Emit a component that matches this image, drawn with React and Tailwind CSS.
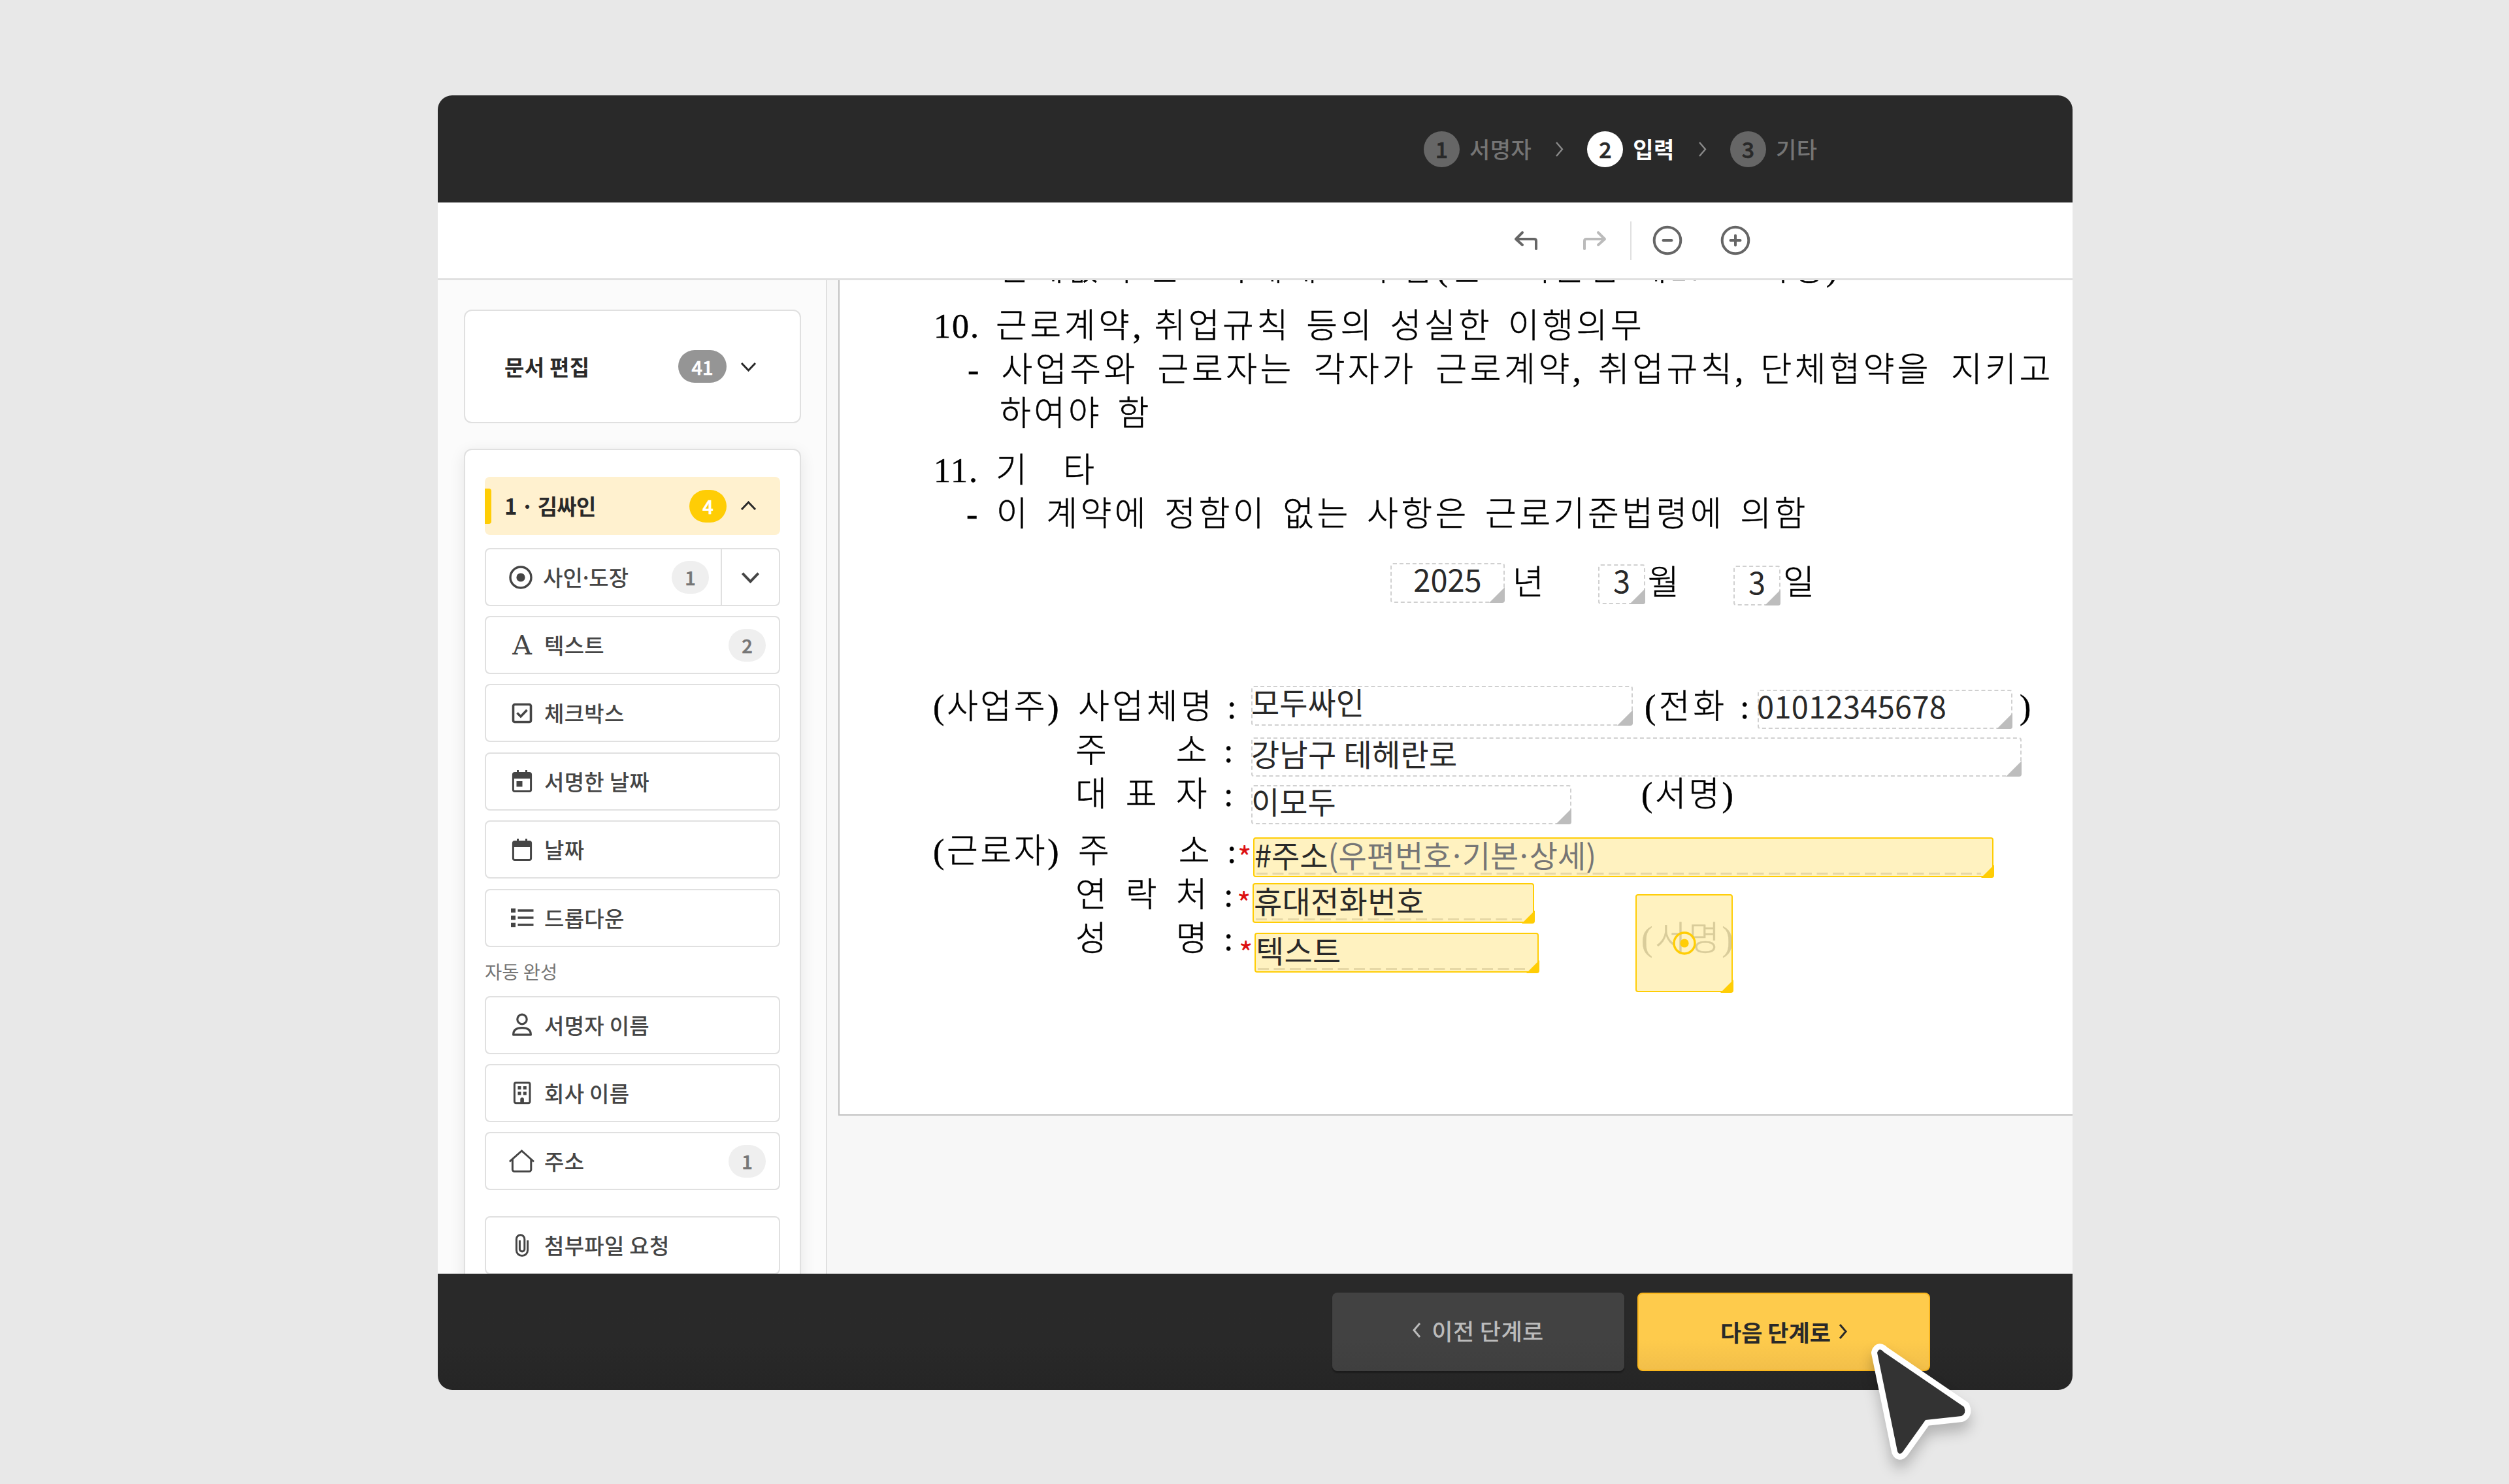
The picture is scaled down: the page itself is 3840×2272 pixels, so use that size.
const STEPS = [
  { n: 1, label: '서명자' },
  { n: 2, label: '입력', active: true },
  { n: 3, label: '기타' },
]

const BASIC_ITEMS = [
  { icon: TextIcon, label: '텍스트', count: 2 },
  { icon: CheckboxIcon, label: '체크박스' },
  { icon: SignedDateIcon, label: '서명한 날짜' },
  { icon: DateIcon, label: '날짜' },
  { icon: ListIcon, label: '드롭다운' },
]

const AUTO_ITEMS = [
  { icon: PersonIcon, label: '서명자 이름' },
  { icon: BuildingIcon, label: '회사 이름' },
  { icon: HomeIcon, label: '주소', count: 1 },
]

function Chevron({ className, dir = 'down', w = 3 }) {
  const d = {
    down: 'M2 2 L12.5 13 L23 2',
    up: 'M2 13 L12.5 2 L23 13',
    right: 'M2 2 L11 12.5 L2 23',
    left: 'M11 2 L2 12.5 L11 23',
  }[dir]
  const box = dir === 'down' || dir === 'up' ? '0 0 25 15' : '0 0 13 25'
  return (
    <svg viewBox={box} className={className} fill="none" stroke="currentColor" strokeWidth={w}>
      <path d={d} />
    </svg>
  )
}

function IconBox({ children }) {
  return (
    <svg viewBox="0 0 40 40" className="w-10 h-10 shrink-0" fill="none" stroke="currentColor" strokeWidth="3.6">
      {children}
    </svg>
  )
}

function StampIcon({ className }) {
  return (
    <svg viewBox="0 0 40 40" className={className} fill="none" stroke="currentColor" strokeWidth="3.4">
      <circle cx="20" cy="20" r="16" />
      <circle cx="20" cy="20" r="6.6" fill="currentColor" stroke="none" />
    </svg>
  )
}

function TextIcon() {
  return (
    <span className="w-10 h-10 shrink-0 text-center leading-10 text-[41px] font-['DejaVu_Serif',serif]">A</span>
  )
}

function CheckboxIcon() {
  return (
    <IconBox>
      <rect x="6.5" y="6.5" width="27" height="27" rx="2.5" />
      <path d="M12.5 19.5 L18 25 L27.5 15" />
    </IconBox>
  )
}

function DateIcon() {
  return (
    <IconBox>
      <rect x="6.4" y="7.4" width="27.2" height="28" rx="2.5" strokeWidth="3" />
      <path d="M5 9 h30 v7 h-30 z" fill="currentColor" stroke="none" />
      <path d="M13.5 3 v6 M26.5 3 v6" strokeWidth="3" />
    </IconBox>
  )
}

function SignedDateIcon() {
  return (
    <IconBox>
      <rect x="6.4" y="7.4" width="27.2" height="28" rx="2.5" strokeWidth="3" />
      <path d="M5 9 h30 v7 h-30 z" fill="currentColor" stroke="none" />
      <path d="M13.5 3 v6 M26.5 3 v6" strokeWidth="3" />
      <rect x="11.5" y="20" width="9" height="8.5" fill="currentColor" stroke="none" />
    </IconBox>
  )
}

function ListIcon() {
  return (
    <IconBox>
      <path d="M13.5 9 h24 M13.5 20 h24 M13.5 31 h24" strokeWidth="3.4" />
      <path d="M3 9 h7 M3 20 h7 M3 31 h7" strokeWidth="6.4" />
    </IconBox>
  )
}

function PersonIcon() {
  return (
    <IconBox>
      <ellipse cx="20" cy="11.5" rx="7.2" ry="7.4" strokeWidth="3.2" />
      <path d="M6.6 35.2 C6.6 27.6 12 24.6 20 24.6 C28 24.6 33.4 27.6 33.4 35.2 Z" strokeWidth="3.2" strokeLinejoin="round" />
    </IconBox>
  )
}

function BuildingIcon() {
  return (
    <IconBox>
      <rect x="8.4" y="4.4" width="23.6" height="31.4" rx="2.5" strokeWidth="3" />
      <path d="M13.5 12.4 h5 M21.8 12.4 h5 M13.5 21 h5 M21.8 21 h5" strokeWidth="5" />
      <path d="M17.3 36 v-6 a2.8 2.8 0 0 1 5.6 0 v6 z" fill="currentColor" stroke="none" />
    </IconBox>
  )
}

function HomeIcon() {
  return (
    <IconBox>
      <path d="M0.8 20.5 L19.5 4 L38 20.5" strokeWidth="3" />
      <path d="M5.4 17 V32.5 a3 3 0 0 0 3 3 H30.8 a3 3 0 0 0 3 -3 V17" strokeWidth="3" />
    </IconBox>
  )
}

function ClipIcon() {
  return (
    <IconBox>
      <path
        d="M28.6 12 V27 A8.6 8.6 0 0 1 11.4 27 V10 A6.2 6.2 0 0 1 23.8 10 V26 A3.8 3.8 0 0 1 16.4 26 V12"
        strokeWidth="3"
      />
    </IconBox>
  )
}

function Badge({ children, tone = 'light' }) {
  const cls = {
    light: 'min-w-[57px] bg-[#efefef] text-[#767676]',
    gray: 'min-w-[74px] bg-[#959595] text-white',
    yellow: 'min-w-[57px] bg-[#ffcd05] text-white',
  }[tone]
  return (
    <span className={`h-[50px] rounded-[25px] flex items-center justify-center text-[29px] leading-none font-medium [-webkit-text-stroke:0.6px_currentColor] ${cls}`}>
      {children}
    </span>
  )
}

function Item({ icon: Icon, label, count }) {
  return (
    <div className="h-[89px] shrink-0 border-2 border-[#e0e0e0] rounded-lg bg-white flex items-center pl-[35px] pr-5 text-[#454545]">
      <Icon />
      <span className="ml-[14px] text-[33px] leading-none font-medium tracking-[0.3px]">{label}</span>
      {count && <span className="ml-auto"><Badge>{count}</Badge></span>}
    </div>
  )
}

function Sidebar() {
  return (
    <aside className="w-[596px] h-full border-r-2 border-[#e0e0e0] bg-[#fbfbfb] pt-[45px] pl-10 pr-[38px]">
      <div className="h-[174px] border-2 border-[#e0e0e0] rounded-xl bg-white flex items-center pl-[60px] pr-[66px] text-[#292929]">
        <span className="text-[33px] leading-none font-bold tracking-[0.3px]">문서 편집</span>
        <span className="ml-auto mr-[21px]"><Badge tone="gray">41</Badge></span>
        <Chevron className="w-[25px] h-[15px]" />
      </div>

      <div className="mt-[39px] h-[1400px] border-2 border-[#e0e0e0] rounded-xl bg-white px-[30px] pt-[41px] shadow-[0_6px_24px_rgba(0,0,0,0.09)] flex flex-col">
        <div className="h-[89px] shrink-0 rounded-lg bg-[#fff1cf] flex items-center pr-9 text-[#292929]">
          <span className="w-[10px] h-[54px] rounded-r bg-[#ffcd05]" />
          <span className="ml-5 text-[33px] leading-none font-bold tracking-[-0.8px]">1 · 김싸인</span>
          <span className="ml-auto mr-[21px]"><Badge tone="yellow">4</Badge></span>
          <Chevron dir="up" className="w-[25px] h-[15px]" />
        </div>

        <div className="mt-5 h-[89px] shrink-0 border-2 border-[#e0e0e0] rounded-lg flex items-center text-[#454545]">
          <StampIcon className="ml-[33px] w-10 h-10" />
          <span className="ml-[14px] text-[33px] leading-none font-medium tracking-[0.2px]">
            사인<span className="-mx-[5px]">·</span>도장
          </span>
          <span className="ml-auto mr-[18px]"><Badge>1</Badge></span>
          <span className="w-[89px] h-full border-l-2 border-[#e0e0e0] flex items-center justify-center">
            <Chevron w={3.4} className="w-[29px] h-[18px]" />
          </span>
        </div>

        <div className="mt-[15px] flex flex-col gap-[15.4px]">
          {BASIC_ITEMS.map(it => <Item key={it.label} {...it} />)}
        </div>
        <p className="h-[75px] shrink-0 flex items-center text-[28.5px] leading-none text-[#767676]">자동 완성</p>
        <div className="flex flex-col gap-[15.4px]">
          {AUTO_ITEMS.map(it => <Item key={it.label} {...it} />)}
        </div>
        <div className="mt-10">
          <Item icon={ClipIcon} label="첨부파일 요청" />
        </div>
      </div>
    </aside>
  )
}

/* One printed line of the contract; commas are set tight */
function Line({ text, className = '' }) {
  return (
    <p className={`h-[67px] leading-[67px] whitespace-pre ${className}`}>
      {text.split(/(,)/).map((part, i) =>
        part === ',' ? <span key={i} className="tracking-[-3.5px]">,</span> : part
      )}
    </p>
  )
}

function PartyRow({ party, label, wide, children }) {
  return (
    <div className="h-[67px] leading-[67px] flex whitespace-pre">
      <span className="w-[218px] tracking-[3.6px]">{party}</span>
      <span className={`flex justify-between w-[206px] ${wide ? 'ml-1 mr-[22px]' : 'mr-[21px]'}`}>
        {[...label].map(ch => <span key={ch}>{ch}</span>)}
      </span>
      <span className="w-6">:</span>
      {children}
    </div>
  )
}

function Filled({ className, children }) {
  return (
    <div className={`absolute border-2 border-dashed border-[#d0d0d0] rounded text-[47px] leading-[43px] text-[#292929] whitespace-pre ${className}`}>
      {children}
      <svg viewBox="0 0 24 24" className="absolute -right-[2px] -bottom-[2px] w-6 h-6">
        <path d="M24 0 V20 a4 4 0 0 1 -4 4 H0 Z" fill="#bdbdbd" />
      </svg>
    </div>
  )
}

function Pending({ className, children, plain }) {
  return (
    <div className={`absolute border-[2.5px] border-[#ffcd05] rounded bg-[#fff0b5]/85 text-[47px] leading-[48px] text-[#292929] whitespace-pre ${className}`}>
      {!plain && <span className="absolute -left-[26px] -top-[3px] text-[46px] leading-[60px] text-[#dd1010]">*</span>}
      {children}
      {!plain && (
        <svg className="absolute left-[3px] bottom-[2px] w-[calc(100%-20px)] h-[3px]">
          <line x1="0" y1="1.5" x2="100%" y2="1.5" stroke="#e6d8a6" strokeWidth="3" strokeDasharray="17 7.5" />
        </svg>
      )}
      <svg viewBox="0 0 20 20" className="absolute -right-[3px] -bottom-[3px] w-5 h-5">
        <path d="M20 0 V16 a4 4 0 0 1 -4 4 H0 Z" fill="#ffcd05" />
      </svg>
    </div>
  )
}

function Contract() {
  return (
    <div className="relative ml-[17px] w-[1900px] h-[1279px] border-l-2 border-b-2 border-[#c2c2c2] bg-white">
      <div className="absolute inset-0 text-[52px] tracking-[4.5px] text-black font-light [-webkit-text-stroke:0.5px_currentColor] font-['Liberation_Serif','Noto_Sans_CJK_KR',serif]">
        <Line className="-mt-[51px] pl-[243px] [word-spacing:3px] tracking-[4.6px]" text="관계없이 근로자에게 교부함(근로기준법 제17조 이행)" />
        <div className="mt-[21px] flex">
          <Line className="w-[239px] pl-[144px] tracking-[2px]" text="10." />
          <Line className="[word-spacing:6px]" text="근로계약, 취업규칙 등의 성실한 이행의무" />
        </div>
        <Line className="pl-[196px] [word-spacing:12.2px]" text="- 사업주와 근로자는 각자가 근로계약, 취업규칙, 단체협약을 지키고" />
        <Line className="pl-[245px] [word-spacing:6px]" text="하여야 함" />
        <div className="mt-5 flex">
          <Line className="w-[239px] pl-[144px] tracking-[2px]" text="11." />
          <Line className="[word-spacing:8px]" text="기  타" />
        </div>
        <Line className="pl-[194px] [word-spacing:6.5px]" text="- 이 계약에 정함이 없는 사항은 근로기준법령에 의함" />

        <div className="mt-[38px] flex h-[67px] leading-[67px] pl-[1030px]">
          <span className="w-[207px]">년</span>
          <span className="w-[207px]">월</span>
          <span>일</span>
        </div>

        <div className="mt-[123px] pl-[143px]">
          <PartyRow party="(사업주)" label="사업체명" wide>
            <span className="ml-[615px] w-[574px] [word-spacing:2px]">(전화 :</span>
            <span>)</span>
          </PartyRow>
          <PartyRow label="주소" />
          <PartyRow label="대표자">
            <span className="ml-[615px] tracking-[3.5px]">(서명)</span>
          </PartyRow>
          <div className="h-5" />
          <PartyRow party="(근로자)" label="주소" wide />
          <PartyRow label="연락처" />
          <PartyRow label="성명">
            <span className="ml-[615px] tracking-[3.5px]">(서명)</span>
          </PartyRow>
        </div>
      </div>

      <Filled className="left-[843px] top-[433px] w-[175px] h-[61px] text-center">2025</Filled>
      <Filled className="left-[1161px] top-[435px] w-[72px] h-[61px] text-center">3</Filled>
      <Filled className="left-[1368px] top-[437px] w-[72px] h-[61px] text-center">3</Filled>
      <Filled className="left-[630px] top-[621px] w-[584px] h-[61px] indent-[-2px]">모두싸인</Filled>
      <Filled className="left-[1405px] top-[627px] w-[390px] h-[60px] indent-[-3px] tracking-[0.3px]">01012345678</Filled>
      <Filled className="left-[630px] top-[700px] w-[1179px] h-[60px] indent-[-2px] tracking-[0.3px]">강남구 테헤란로</Filled>
      <Filled className="left-[630px] top-[773px] w-[490px] h-[60px] indent-[-2px]">이모두</Filled>

      <Pending className="left-[633px] top-[853px] w-[1133px] h-[61px]">
        #주소
        <span className="text-[#767676]">
          (우편번호<span className="-mx-[5px]">·</span>기본<span className="-mx-[5px]">·</span>상세)
        </span>
      </Pending>
      <Pending className="left-[632px] top-[923px] w-[431px] h-[61px] tracking-[0.3px]">휴대전화번호</Pending>
      <Pending className="left-[635px] top-[999px] w-[435px] h-[61px] tracking-[0.3px]">텍스트</Pending>
      <Pending plain className="left-[1218px] top-[940px] w-[149px] h-[150px] flex items-center justify-center">
        <StampIcon className="w-10 h-10 text-[#ffcd05]" />
      </Pending>
    </div>
  )
}

function Cursor() {
  return (
    <svg viewBox="0 0 180 210" className="absolute left-[2850px] top-[2040px] w-[180px] h-[210px] drop-shadow-[0_14px_10px_rgba(0,0,0,0.22)]">
      <path
        d="M23 31 Q26 22 33 30 L156 114 Q160 124 152 128 L97 134 L62 183 Q57 189 54 182 Z"
        fill="#333"
        stroke="#fff"
        strokeWidth="18"
        strokeLinejoin="round"
        className="[paint-order:stroke]"
      />
    </svg>
  )
}

export default function App() {
  return (
    <div className="relative w-[3840px] h-[2272px] overflow-hidden bg-[#e8e8e8] pl-[670px] pt-[146px] font-['Noto_Sans_CJK_KR',sans-serif]">
      <div className="w-[2502px] h-[1982px] rounded-[22px] overflow-hidden flex flex-col bg-[#f7f7f7]">
        <header className="h-[164px] shrink-0 bg-[#292929] flex items-center pl-[1509px]">
          {STEPS.map((s, i) => (
            <div key={s.n} className="flex items-center">
              {i > 0 && <Chevron dir="right" w={2.4} className="mx-[36px] w-[13px] h-[25px] text-[#8a8a8a]" />}
              <span className={`w-[55px] h-[55px] rounded-full flex items-center justify-center text-[34px] leading-none font-medium [-webkit-text-stroke:0.6px_currentColor] text-[#292929] ${s.active ? 'bg-white' : 'bg-[#666]'}`}>
                {s.n}
              </span>
              <span className={`ml-[15px] text-[34px] leading-none tracking-[0.5px] ${s.active ? 'text-white font-bold' : 'text-[#757575] font-medium'}`}>
                {s.label}
              </span>
            </div>
          ))}
        </header>

        <div className="h-[119px] shrink-0 bg-white border-b-[3px] border-[#e0e0e0] flex items-center pl-[1646px] text-[#666]">
          <svg viewBox="0 0 40 40" className="w-10 h-10" fill="none" stroke="currentColor" strokeWidth="4" strokeLinecap="round" strokeLinejoin="round">
            <path d="M14 8 L4 18 L14 27 M4 18 H32 Q35 18 35 21 V33" />
          </svg>
          <svg viewBox="0 0 40 40" className="ml-[64px] w-10 h-10 text-[#bbb]" fill="none" stroke="currentColor" strokeWidth="4" strokeLinecap="round" strokeLinejoin="round">
            <path d="M26 8 L36 18 L26 27 M36 18 H8 Q5 18 5 21 V33" />
          </svg>
          <span className="ml-[35px] w-[2px] h-[59px] bg-[#e0e0e0]" />
          <svg viewBox="0 0 46 46" className="ml-8 w-[46px] h-[46px]" fill="none" stroke="currentColor" strokeWidth="4" strokeLinecap="round">
            <circle cx="23" cy="23" r="20.3" />
            <path d="M16.5 23 H29.5" />
          </svg>
          <svg viewBox="0 0 46 46" className="ml-[58px] w-[46px] h-[46px]" fill="none" stroke="currentColor" strokeWidth="4" strokeLinecap="round">
            <circle cx="23" cy="23" r="20.3" />
            <path d="M15.5 23 H30.5 M23 15.5 V30.5" />
          </svg>
        </div>

        <div className="flex-1 min-h-0 flex overflow-hidden">
          <Sidebar />
          <main className="flex-1 overflow-hidden">
            <Contract />
          </main>
        </div>

        <footer className="h-[178px] shrink-0 flex items-center gap-5 pl-[1369px] bg-linear-to-b from-[#292929] from-60% to-[#252525]">
          <div className="w-[447px] h-[120px] rounded-lg bg-linear-to-b from-[#424242] from-60% to-[#3f3f3f] shadow-[0_3px_2px_rgba(0,0,0,0.3)] flex items-center justify-center pb-[6px] text-[#bbb]">
            <Chevron dir="left" className="w-[13px] h-[25px] mr-[16px]" />
            <span className="text-[35px] leading-none font-medium tracking-[0.4px]">이전 단계로</span>
          </div>
          <div className="w-[448px] h-[120px] rounded-lg border-2 border-[#fbb71d] bg-linear-to-b from-[#fecb4c] from-60% to-[#f2bf4a] flex items-center justify-center pb-[2px] text-[#292929]">
            <span className="text-[35px] leading-none font-bold">다음 단계로</span>
            <Chevron dir="right" className="w-[13px] h-[25px] ml-[12px]" />
          </div>
        </footer>
      </div>
      <Cursor />
    </div>
  )
}
